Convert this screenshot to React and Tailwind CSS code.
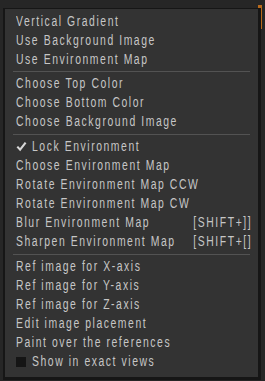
import React from "react";

const Row = ({ children, right, mark }) => (
  <div className="flex items-center h-[19px] pl-[11px] pr-[6px] whitespace-nowrap">
    {mark === "check" && (
      <span className="w-[16px] shrink-0 flex items-center">
        <svg width="11" height="11" viewBox="0 0 11 11">
          <path d="M1.3 5.6 L4.1 8.7 L9.6 1.6" stroke="#d8d8d8" strokeWidth="2.1" fill="none" />
        </svg>
      </span>
    )}
    {mark === "box" && (
      <span className="w-[16px] shrink-0 flex items-center">
        <span className="block w-[10px] h-[10px] bg-[#151515]" />
      </span>
    )}
    <span className="flex-1 min-w-0">
      <span className="inline-block origin-left scale-x-[0.743]">{children}</span>
    </span>
    {right && (
      <span className="shrink-0 inline-block origin-right scale-x-[0.743]">{right}</span>
    )}
  </div>
);

const Sep = ({ h }) => (
  <div className={`flex items-center px-[8px] ${h === 6 ? "h-[6px]" : "h-[5px]"}`}>
    <div className="h-px w-full bg-[#535353]" />
  </div>
);

export default function App() {
  return (
    <div
      className="relative w-[265px] h-[381px] bg-[#262626] overflow-hidden"
      style={{ fontFamily: '"Liberation Sans", Arial, sans-serif' }}
    >
      <div className="absolute right-[3px] top-[5px] w-[4px] h-[24px] bg-[#b86a1c]" />
      <div className="absolute left-[3px] top-[8px] w-[258px] h-[372px] bg-[#161616]" />
      <div className="relative ml-[5px] mt-[9px] w-[253px] h-[368px] bg-[#333333] pt-[3px] text-[14px] leading-[19px] text-[#c6c6c6] tracking-[2.1px]">
        <Row>Vertical Gradient</Row>
        <Row>Use Background Image</Row>
        <Row>Use Environment Map</Row>
        <Sep h={5} />
        <Row>Choose Top Color</Row>
        <Row>Choose Bottom Color</Row>
        <Row>Choose Background Image</Row>
        <Sep h={6} />
        <Row mark="check">Lock Environment</Row>
        <Row>Choose Environment Map</Row>
        <Row>Rotate Environment Map CCW</Row>
        <Row>Rotate Environment Map CW</Row>
        <Row right="[SHIFT+]]">Blur Environment Map</Row>
        <Row right="[SHIFT+[]">Sharpen Environment Map</Row>
        <Sep h={6} />
        <Row>Ref image for X-axis</Row>
        <Row>Ref image for Y-axis</Row>
        <Row>Ref image for Z-axis</Row>
        <Row>Edit image placement</Row>
        <Row>Paint over the references</Row>
        <Row mark="box">Show in exact views</Row>
      </div>
    </div>
  );
}
